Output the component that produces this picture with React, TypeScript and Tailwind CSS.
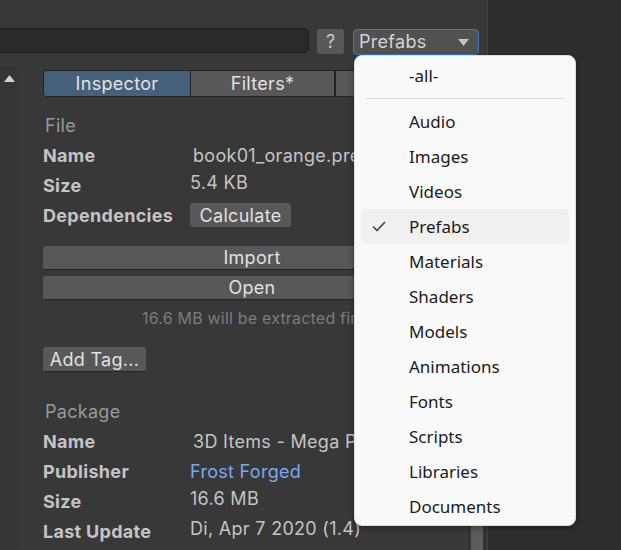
import React from "react";

const menuItems = [
  "Audio",
  "Images",
  "Videos",
  "Prefabs",
  "Materials",
  "Shaders",
  "Models",
  "Animations",
  "Fonts",
  "Scripts",
  "Libraries",
  "Documents",
];

function Row({ label, children }: { label: string; children: React.ReactNode }) {
  return (
    <div className="flex h-[30px] items-center">
      <div className="w-[147px] font-bold text-[18px] tracking-[0.3px] text-[#c4c4c4]">{label}</div>
      <div className="flex-1 whitespace-nowrap text-[18px] tracking-[0.3px] text-[#c4c4c4]">{children}</div>
    </div>
  );
}

export default function App() {
  return (
    <div className="relative flex h-[550px] w-[621px] overflow-hidden bg-[#2e2e2e] font-['Inter',sans-serif]">
      {/* main panel */}
      <div className="flex h-full w-[488px] flex-col border-r border-[#404040] bg-[#383838]">
        {/* toolbar */}
        <div className="flex items-start pt-[28px]">
          <div className="h-[25px] w-[309px] rounded-r-[5px] border border-l-0 border-[#1e1e1e] bg-[#2a2a2a]" />
          <div className="ml-[8px] mt-[1px] flex h-[25px] w-[27px] items-center justify-center rounded-[3px] bg-[#585858] text-[18px] text-[#c8c8c8]">
            ?
          </div>
          <div className="ml-[9px] mt-[1px] flex h-[26px] w-[126px] items-center justify-between rounded-[4px] border border-[#3a7bc4] bg-[#515151] pl-[5px] pr-[9px]">
            <span className="text-[18px] leading-none tracking-[0.3px] text-[#d4d4d4]">Prefabs</span>
            <svg width="11" height="7" viewBox="0 0 11 7">
              <path d="M0 0 H11 L5.5 7 Z" fill="#c4c4c4" />
            </svg>
          </div>
        </div>
        {/* body */}
        <div className="mt-[12px] flex flex-1 overflow-hidden">
          {/* left scrollbar strip */}
          <div className="flex w-[19px] flex-col items-center bg-[#353535] pt-[8px]">
            <svg width="11" height="7" viewBox="0 0 11 7">
              <path d="M0 7 H11 L5.5 0 Z" fill="#d0d0d0" />
            </svg>
          </div>
          {/* content */}
          <div className="flex flex-1 flex-col overflow-hidden pl-[24px] pt-[3px]">
            {/* tabs */}
            <div className="flex h-[27px] w-[440px] shrink-0 overflow-hidden rounded-[4px] border border-[#232323]">
              <div className="flex w-[146px] items-center justify-center bg-[#46607c] text-[18px] tracking-[0.3px] text-[#e2e2e2]">
                Inspector
              </div>
              <div className="flex w-[144px] items-center justify-center border-l border-[#232323] bg-[#585858] text-[18px] tracking-[0.3px] text-[#e2e2e2]">
                Filters*
              </div>
              <div className="flex-1 border-l-2 border-[#232323] bg-[#585858]" />
            </div>

            <div className="mt-[17px] pl-[2px] text-[18px] leading-[24px] tracking-[0.3px] text-[#9a9a9a]">File</div>
            <div className="mt-[2px]">
              <Row label="Name">
                <span className="pl-[3px]">book01_orange.prefab</span>
              </Row>
              <Row label="Size">
                <span className="relative -top-[3px]">5.4 KB</span>
              </Row>
              <Row label="Dependencies">
                <span className="inline-flex h-[24px] w-[101px] items-center justify-center rounded-[3px] bg-[#585858] text-[18px] text-[#e0e0e0]">
                  Calculate
                </span>
              </Row>
            </div>

            <div className="mt-[16px] flex w-[418px] flex-col gap-[6px]">
              <div className="flex h-[24px] items-center justify-center rounded-[3px] border-b border-[#242424] bg-[#585858] text-[18px] tracking-[0.3px] text-[#e0e0e0]">
                Import
              </div>
              <div className="flex h-[24px] items-center justify-center rounded-[3px] border-b border-[#242424] bg-[#585858] text-[18px] tracking-[0.3px] text-[#e0e0e0]">
                Open
              </div>
            </div>
            <div className="mt-[6px] w-[418px] whitespace-nowrap pl-[99px] text-[16px] leading-[24px] tracking-[0.2px] text-[#7c7c7c]">
              16.6 MB will be extracted first
            </div>

            <div className="mt-[17px] flex h-[25px] w-[103px] items-center justify-center rounded-[3px] border-b border-[#242424] bg-[#585858] text-[18px] tracking-[0.3px] text-[#e0e0e0]">
              Add Tag...
            </div>

            <div className="mt-[28px] pl-[2px] text-[18px] leading-[24px] tracking-[0.3px] text-[#9a9a9a]">Package</div>
            <div className="mt-[2px]">
              <Row label="Name">
                <span className="pl-[3px]">3D Items - Mega Pack</span>
              </Row>
              <Row label="Publisher">
                <span className="text-[#7aa9f0]">Frost Forged</span>
              </Row>
              <Row label="Size">
                <span className="relative -top-[3px]">16.6 MB</span>
              </Row>
              <Row label="Last Update">
                <span className="relative -top-[3px]">Di, Apr 7 2020 (1.4)</span>
              </Row>
            </div>
          </div>
          {/* right scrollbar */}
          <div className="flex w-[19px] justify-start bg-[#333333] pl-[3px]">
            <div className="mt-[300px] h-[300px] w-[12px] bg-[#5c5c5c]" />
          </div>
        </div>
      </div>

      {/* dropdown menu overlay */}
      <div className="absolute left-[354px] top-[55px] h-[471px] w-[222px] rounded-[8px] border border-[#dcdcdc] bg-[#f9f9f9] px-[6px] pt-[2px] shadow-[0_2px_6px_rgba(0,0,0,0.35)] font-['Segoe_UI','Noto_Sans',sans-serif]">
        <div className="flex h-[35px] items-center pl-[48px] text-[17px] text-[#1b1b1b]">-all-</div>
        <div className="mx-[5px] mb-[5px] mt-[5px] h-px bg-[#d6d6d6]" />
        {menuItems.map((it) => (
          <div
            key={it}
            className={
              "relative flex h-[35px] items-center rounded-[5px] pl-[48px] text-[17px] text-[#1b1b1b] " +
              (it === "Prefabs" ? "bg-[#f0f0f0]" : "")
            }
          >
            {it === "Prefabs" && (
              <svg className="absolute left-[11px] top-[12px]" width="14" height="11" viewBox="0 0 14 11">
                <path d="M1 5.5 L5 9.5 L13 1" fill="none" stroke="#333" strokeWidth="1.3" />
              </svg>
            )}
            {it}
          </div>
        ))}
      </div>
    </div>
  );
}
